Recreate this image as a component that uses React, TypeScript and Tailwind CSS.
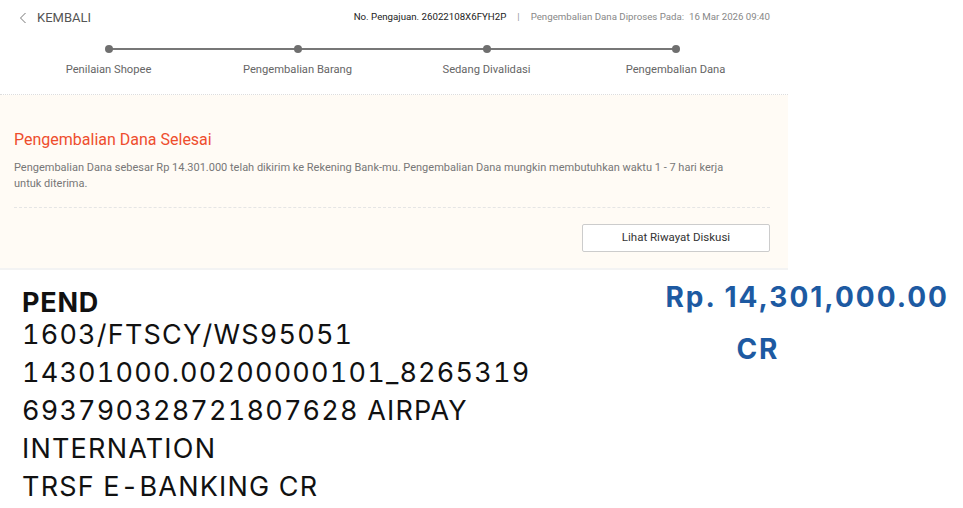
import React from "react";

const steps = ["Penilaian Shopee", "Pengembalian Barang", "Sedang Divalidasi", "Pengembalian Dana"];

export default function App() {
  return (
    <div className="w-[963px] h-[508px] bg-white overflow-hidden" style={{ fontFamily: "Roboto, 'Liberation Sans', sans-serif" }}>
      <div className="w-[788px]">
        {/* header */}
        <div className="flex items-center justify-between h-[35px] pl-[19px] pr-[18px]">
          <div className="flex items-center gap-[10px] text-[13px] text-[#555]">
            <svg width="8" height="12" viewBox="0 0 8 12" fill="none">
              <path d="M6.5 1 L1.5 6 L6.5 11" stroke="#777" strokeWidth="1" />
            </svg>
            <span>KEMBALI</span>
          </div>
          <div className="flex items-center text-[9.7px]">
            <span className="text-[#222]">No. Pengajuan. 26022108X6FYH2P</span>
            <span className="mx-[11px] text-[#999]">|</span>
            <span className="text-[#888]">Pengembalian Dana Diproses Pada:&nbsp; 16 Mar 2026 09:40</span>
          </div>
        </div>
        {/* stepper */}
        <div className="relative pl-[14px] pr-[18px] pt-[10px] h-[60px] border-b border-dotted border-[#ddd]">
          <div className="grid grid-cols-4">
            {steps.map((s, i) => (
              <div key={s} className="flex flex-col items-center relative">
                <div className="relative w-full h-[8px] flex justify-center items-center">
                  {i > 0 && <div className="absolute left-0 right-1/2 h-[2px] bg-[#777]" />}
                  {i < 3 && <div className="absolute left-1/2 right-0 h-[2px] bg-[#777]" />}
                  <div className="relative w-[8px] h-[8px] rounded-full bg-[#6f6f6f]" />
                </div>
                <div className="mt-[10px] text-[11.2px] text-[#666] leading-[14px]">{s}</div>
              </div>
            ))}
          </div>
        </div>
        {/* beige */}
        <div className="bg-[#fffbf5] pl-[14px] pr-[18px] pt-[35px] pb-[16px] border-b-2 border-[#f3f3f3]">
          <div className="text-[16px] text-[#ee4d2d] leading-[20px]">Pengembalian Dana Selesai</div>
          <p className="mt-[10px] text-[11px] leading-[16px] text-[#777] w-[735px]">
            Pengembalian Dana sebesar Rp 14.301.000 telah dikirim ke Rekening Bank-mu. Pengembalian Dana mungkin membutuhkan waktu 1 - 7 hari kerja untuk diterima.
          </p>
          <div className="mt-[15px] border-t border-dashed border-[#e5e5e5]" />
          <div className="flex justify-end mt-[16px]">
            <button className="w-[188px] h-[28px] bg-white border border-[#ccc] rounded-[2px] text-[11.5px] text-[#333]">
              Lihat Riwayat Diskusi
            </button>
          </div>
        </div>
      </div>
      {/* bank */}
      <div className="flex justify-between" style={{ fontFamily: "Inter, 'DejaVu Sans', sans-serif" }}>
        <div className="pl-[22px] pt-[19px] text-[27px] text-[#111] leading-[38px] tracking-[1.2px] tabular-nums">
          <div className="font-bold leading-[27px] tracking-[0.8px]">PEND</div>
          <div>1603/FTSCY/WS95051</div>
          <div>14301000.00200000101_8265319</div>
          <div>693790328721807628 AIRPAY</div>
          <div>INTERNATION</div>
          <div>TRSF E-BANKING CR</div>
        </div>
        <div className="pr-[14px] pt-[1px] text-[28px] font-bold text-[#1d5aa2] leading-[52px] tracking-[2px]">
          <div>Rp. 14,301,000.00</div>
          <div className="pl-[71px]">CR</div>
        </div>
      </div>
    </div>
  );
}
